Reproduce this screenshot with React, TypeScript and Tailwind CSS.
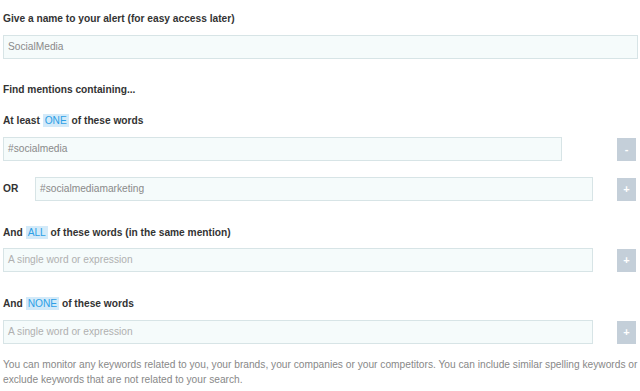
import React from "react";

const font = { fontFamily: '"Liberation Sans", Arial, sans-serif' };

function Hl({ children }: { children: React.ReactNode }) {
  return <span className="bg-[#d3eaf9] px-[2px] py-[1px] font-normal text-[#2d9fe6]">{children}</span>;
}

function Label({ children, className = "" }: { children: React.ReactNode; className?: string }) {
  return <div className={`pt-[2px] text-[10.2px] font-bold leading-[14px] ${className}`}>{children}</div>;
}

function Field({ value, placeholder, className }: { value?: string; placeholder?: string; className: string }) {
  return (
    <div
      className={`flex h-[24px] items-center border border-[#d7e4e6] bg-[#f5fbfb] px-[4px] text-[10.2px] ${
        value ? "text-[#8a8a8a]" : "text-[#b0b0b0]"
      } ${className}`}
    >
      {value ?? placeholder}
    </div>
  );
}

function Btn({ sign }: { sign: string }) {
  return (
    <div className="ml-auto flex h-[23px] w-[19px] items-center justify-center bg-[#c4cfd9] text-[11px] font-bold leading-none text-white">
      {sign}
    </div>
  );
}

export default function App() {
  return (
    <div className="h-[391px] w-[640px] bg-white pl-[3px] pr-[2px] pt-[10px] text-[#333]" style={font}>
      <Label>Give a name to your alert (for easy access later)</Label>
      <Field value="SocialMedia" className="mt-[9px] w-[635px]" />

      <Label className="mt-[22px]">Find mentions containing...</Label>

      <Label className="mt-[15px]">
        At least <Hl>ONE</Hl> of these words
      </Label>
      <div className="mt-[9px] flex items-center pr-[2px]">
        <Field value="#socialmedia" className="w-[559px]" />
        <Btn sign="-" />
      </div>
      <div className="mt-[16px] flex items-center pr-[2px]">
        <span className="w-[32px] text-[10.2px] font-bold">OR</span>
        <Field value="#socialmediamarketing" className="w-[558px]" />
        <Btn sign="+" />
      </div>

      <Label className="mt-[23px]">
        And <Hl>ALL</Hl> of these words (in the same mention)
      </Label>
      <div className="mt-[8px] flex items-center pr-[2px]">
        <Field placeholder="A single word or expression" className="w-[590px]" />
        <Btn sign="+" />
      </div>

      <Label className="mt-[23px]">
        And <Hl>NONE</Hl> of these words
      </Label>
      <div className="mt-[9px] flex items-center pr-[2px]">
        <Field placeholder="A single word or expression" className="w-[590px]" />
        <Btn sign="+" />
      </div>

      <p className="mt-[13px] text-[10.2px] leading-[15px] text-[#888]">
        You can monitor any keywords related to you, your brands, your companies or your competitors. You can include
        similar spelling keywords or exclude keywords that are not related to your search.
      </p>
    </div>
  );
}
